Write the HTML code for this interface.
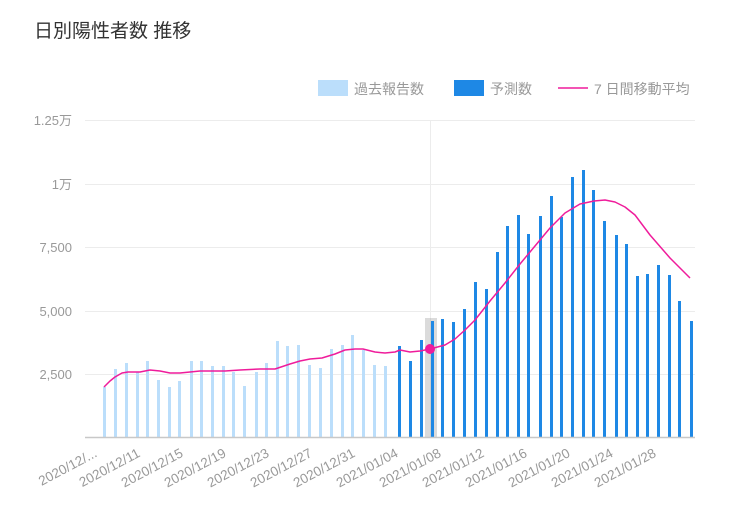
<!DOCTYPE html>
<html><head><meta charset="utf-8"><style>
html,body{margin:0;padding:0;background:#fff;}
body{width:735px;height:517px;overflow:hidden;position:relative;font-family:"Liberation Sans","Noto Sans CJK JP",sans-serif;}
.t{position:absolute;left:34px;top:16px;font-size:19px;color:#333;white-space:nowrap;}
</style></head><body>
<div class="t">日別陽性者数 推移</div>
<svg width="735" height="517" style="position:absolute;left:0;top:0" font-family="Liberation Sans, Noto Sans CJK JP, sans-serif">
<rect x="318" y="80" width="30" height="16" fill="#bbdefb"/>
<text x="354" y="94" font-size="14" fill="#999">過去報告数</text>
<rect x="454" y="80" width="30" height="16" fill="#1e88e5"/>
<text x="490" y="94" font-size="14" fill="#999">予測数</text>
<line x1="558" y1="88" x2="588" y2="88" stroke="#ef1c9b" stroke-width="1.5"/>
<text x="594" y="94" font-size="14" fill="#999">7 日間移動平均</text>
<g stroke="#ececec" stroke-width="1">
<line x1="85" y1="120.5" x2="695" y2="120.5"/>
<line x1="85" y1="184.5" x2="695" y2="184.5"/>
<line x1="85" y1="247.5" x2="695" y2="247.5"/>
<line x1="85" y1="311.5" x2="695" y2="311.5"/>
<line x1="85" y1="374.5" x2="695" y2="374.5"/>
<line x1="430.5" y1="120" x2="430.5" y2="437"/>
</g>
<g font-size="13" fill="#999" text-anchor="end">
<text x="72" y="125">1.25万</text>
<text x="72" y="189">1万</text>
<text x="72" y="252">7,500</text>
<text x="72" y="316">5,000</text>
<text x="72" y="379">2,500</text>
</g>
<rect x="425" y="318" width="12" height="119" fill="#999" opacity="0.35"/>
<g fill="#bbdefb">
<rect x="103" y="387" width="3" height="50"/>
<rect x="114" y="369" width="3" height="68"/>
<rect x="125" y="363" width="3" height="74"/>
<rect x="136" y="372" width="3" height="65"/>
<rect x="146" y="361" width="3" height="76"/>
<rect x="157" y="380" width="3" height="57"/>
<rect x="168" y="387" width="3" height="50"/>
<rect x="178" y="381" width="3" height="56"/>
<rect x="190" y="361" width="3" height="76"/>
<rect x="200" y="361" width="3" height="76"/>
<rect x="211" y="366" width="3" height="71"/>
<rect x="222" y="366" width="3" height="71"/>
<rect x="232" y="372" width="3" height="65"/>
<rect x="243" y="386" width="3" height="51"/>
<rect x="255" y="372" width="3" height="65"/>
<rect x="265" y="363" width="3" height="74"/>
<rect x="276" y="341" width="3" height="96"/>
<rect x="286" y="346" width="3" height="91"/>
<rect x="297" y="345" width="3" height="92"/>
<rect x="308" y="365" width="3" height="72"/>
<rect x="319" y="368" width="3" height="69"/>
<rect x="330" y="349" width="3" height="88"/>
<rect x="341" y="345" width="3" height="92"/>
<rect x="351" y="335" width="3" height="102"/>
<rect x="362" y="350" width="3" height="87"/>
<rect x="373" y="365" width="3" height="72"/>
<rect x="384" y="366" width="3" height="71"/>
</g>
<g fill="#1e88e5">
<rect x="398" y="346" width="3" height="91"/>
<rect x="409" y="361" width="3" height="76"/>
<rect x="420" y="340" width="3" height="97"/>
<rect x="431" y="321" width="3" height="116"/>
<rect x="441" y="319" width="3" height="118"/>
<rect x="452" y="322" width="3" height="115"/>
<rect x="463" y="309" width="3" height="128"/>
<rect x="474" y="282" width="3" height="155"/>
<rect x="485" y="289" width="3" height="148"/>
<rect x="496" y="252" width="3" height="185"/>
<rect x="506" y="226" width="3" height="211"/>
<rect x="517" y="215" width="3" height="222"/>
<rect x="527" y="234" width="3" height="203"/>
<rect x="539" y="216" width="3" height="221"/>
<rect x="550" y="196" width="3" height="241"/>
<rect x="560" y="217" width="3" height="220"/>
<rect x="571" y="177" width="3" height="260"/>
<rect x="582" y="170" width="3" height="267"/>
<rect x="592" y="190" width="3" height="247"/>
<rect x="603" y="221" width="3" height="216"/>
<rect x="615" y="235" width="3" height="202"/>
<rect x="625" y="244" width="3" height="193"/>
<rect x="636" y="276" width="3" height="161"/>
<rect x="646" y="274" width="3" height="163"/>
<rect x="657" y="265" width="3" height="172"/>
<rect x="668" y="275" width="3" height="162"/>
<rect x="678" y="301" width="3" height="136"/>
<rect x="690" y="321" width="3" height="116"/>
</g>
<line x1="85" y1="437.5" x2="695" y2="437.5" stroke="#c8c8c8" stroke-width="1.5"/>
<polyline fill="none" stroke="#ef1c9b" stroke-width="1.5" stroke-linejoin="round" points="104,387 110,381 115,377 122,373 128,372 140,372 150,370 160,371 170,373 180,373 190,372 200,371 212,371 225,371 240,370 260,369 275,369 290,364 300,361 310,359 322,358 335,354 345,350 355,349 363,349 375,352 385,353 395,352 400,350 410,352 420,351 430,349 445,345 455,339 465,330 475,320 490,301 505,283 520,264 535,246 550,228 565,213 580,204 594,201 605,200 615,202 625,207 635,215 650,235 670,258 690,278"/>
<circle cx="430" cy="349" r="5" fill="#ef1c9b"/>
<g font-size="13.5" fill="#999" text-anchor="end">
<text transform="translate(98,456) rotate(-28)">2020/12/...</text>
<text transform="translate(141,456) rotate(-28)">2020/12/11</text>
<text transform="translate(184,456) rotate(-28)">2020/12/15</text>
<text transform="translate(227,456) rotate(-28)">2020/12/19</text>
<text transform="translate(270,456) rotate(-28)">2020/12/23</text>
<text transform="translate(313,456) rotate(-28)">2020/12/27</text>
<text transform="translate(356,456) rotate(-28)">2020/12/31</text>
<text transform="translate(399,456) rotate(-28)">2021/01/04</text>
<text transform="translate(442,456) rotate(-28)">2021/01/08</text>
<text transform="translate(485,456) rotate(-28)">2021/01/12</text>
<text transform="translate(528,456) rotate(-28)">2021/01/16</text>
<text transform="translate(571,456) rotate(-28)">2021/01/20</text>
<text transform="translate(614,456) rotate(-28)">2021/01/24</text>
<text transform="translate(657,456) rotate(-28)">2021/01/28</text>
</g>
</svg>
</body></html>
